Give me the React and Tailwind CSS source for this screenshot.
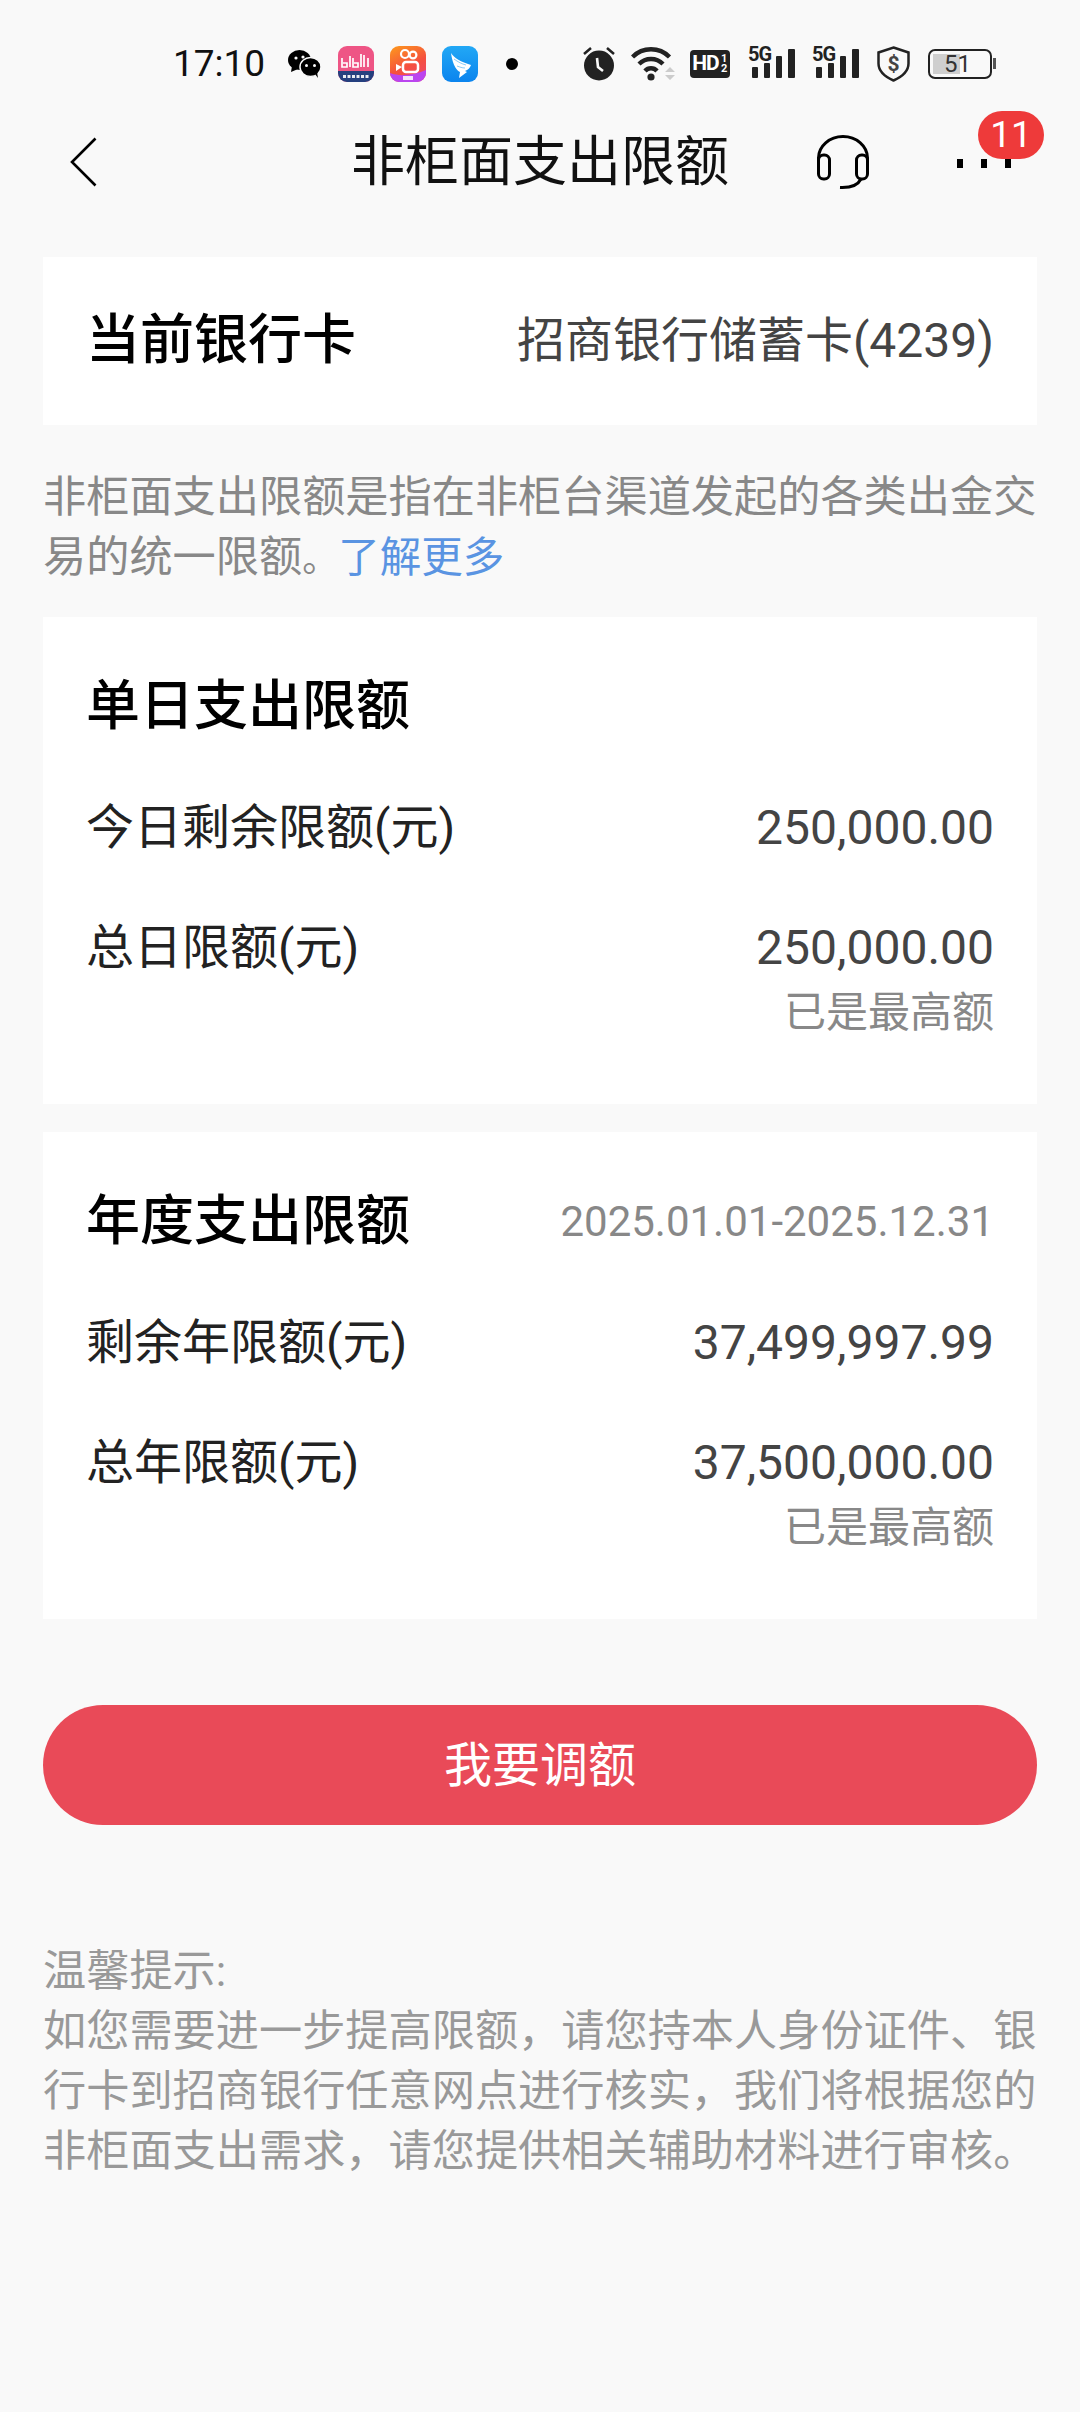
const cjk = "font-['Roboto','Noto_Sans_CJK_SC',sans-serif]";

const tip =
  "如您需要进一步提高限额\uFF0C请您持本人身份证件、银行卡到招商银行任意网点进行核实\uFF0C我们将根据您的非柜面支出需求\uFF0C请您提供相关辅助材料进行审核。";

const Bars = () => (
  <div className="relative w-[47px] h-[32px] mb-[3px]">
    <svg className="block" width="47" height="32" viewBox="0 0 47 32">
      <rect x="4" y="21" width="6" height="11" rx="1" fill="#222" />
      <rect x="16" y="17" width="6" height="15" rx="1" fill="#222" />
      <rect x="28" y="10" width="6" height="22" rx="1" fill="#222" />
      <rect x="40" y="3" width="7" height="29" rx="1" fill="#222" />
    </svg>
    <span className="absolute left-0 top-0 text-[20px] leading-[16px] font-bold text-[#222] tracking-[-1px]">5G</span>
  </div>
);

const StatusBar = () => (
  <div className="h-[127px] pl-[173px] flex items-center">
    <span className="text-[37px] leading-none text-[#111] w-[108px]">17:10</span>
    {/* wechat */}
    <svg className="ml-[7px]" width="33" height="28" viewBox="0 0 33 28">
      <ellipse cx="11.500" cy="10" rx="11.500" ry="10" fill="#000" />
      <path d="M4 16l-1 6 7-3z" fill="#000" />
      <ellipse cx="22.500" cy="17" rx="10.500" ry="9.500" fill="#000" stroke="#f9f9f9" strokeWidth="1.500" />
      <path d="M27 24l3 4-1-6z" fill="#000" />
      <circle cx="8" cy="8" r="1.600" fill="#f9f9f9" />
      <circle cx="15" cy="7" r="1.600" fill="#f9f9f9" />
      <circle cx="18.500" cy="15.500" r="1.500" fill="#f9f9f9" />
      <circle cx="26.500" cy="15.500" r="1.500" fill="#f9f9f9" />
    </svg>
    {/* app icons */}
    <svg className="ml-[17px]" width="36" height="36" viewBox="0 0 36 36">
      <rect width="36" height="36" rx="9" fill="#ee5585" />
      <path d="M0 25h36v2a9 9 0 0 1-9 9H9a9 9 0 0 1-9-9z" fill="#25407f" />
      <path d="M4 12v9h5v-4H5M12 10v11M15 12v9h5v-4h-4M23 8v13M26 9v12M30 12v9" stroke="#fff" strokeWidth="1.700" fill="none" />
      <path d="M5 30.500h26" stroke="#fff" strokeWidth="3" strokeDasharray="3 1.500" opacity="0.9" />
    </svg>
    <svg className="ml-[16px]" width="36" height="36" viewBox="0 0 36 36">
      <defs>
        <linearGradient id="ks" x1="0" y1="0" x2="0.5" y2="1">
          <stop offset="0" stopColor="#fd9a1c" />
          <stop offset="0.65" stopColor="#f5503f" />
          <stop offset="1" stopColor="#f04a60" />
        </linearGradient>
      </defs>
      <rect width="36" height="36" rx="9" fill="url(#ks)" />
      <path d="M0 27c10 4 24 2 36-3v3a9 9 0 0 1-9 9H9a9 9 0 0 1-9-9z" fill="#bb45ef" />
      <circle cx="15" cy="8" r="4" fill="none" stroke="#fff" strokeWidth="2.200" />
      <circle cx="23" cy="9" r="3.400" fill="none" stroke="#fff" strokeWidth="2.200" />
      <rect x="13" y="16" width="15" height="10" rx="3" fill="none" stroke="#fff" strokeWidth="2.500" />
      <path d="M12 21l-6-3v7z" fill="#fff" />
      <rect x="13" y="30" width="10" height="4" fill="#fff" opacity="0.85" />
    </svg>
    <svg className="ml-[16px]" width="36" height="36" viewBox="0 0 36 36">
      <defs>
        <linearGradient id="ding" x1="0" y1="0" x2="0" y2="1">
          <stop offset="0" stopColor="#22a8f5" />
          <stop offset="1" stopColor="#0b84ee" />
        </linearGradient>
      </defs>
      <rect width="36" height="36" rx="9" fill="url(#ding)" />
      <path d="M9 7c3 5 10 9 20 12-1 3-3 5-6 6l2 1-8 6 1-6C13 24 10 15 9 7z" fill="#fff" />
      <path d="M12 13c4 3 8 5 12 6M15 20c3 1 5 2 8 2" stroke="#8ccdf8" strokeWidth="1" fill="none" />
    </svg>
    <div className="ml-[28px] w-[12px] h-[12px] rounded-full bg-black" />
    <div className="ml-[65px] flex items-center">
      {/* alarm */}
      <svg width="32" height="34" viewBox="0 0 32 34">
        <circle cx="16" cy="18.500" r="15" fill="#222" />
        <path d="M1 7l7-6M31 7l-7-6" stroke="#222" strokeWidth="2.500" />
        <path d="M14 11l1 9 5 4" stroke="#f9f9f9" strokeWidth="2.600" fill="none" />
      </svg>
      {/* wifi */}
      <svg className="ml-[16px]" width="44" height="36" viewBox="0 0 44 36">
        <path d="M1.500 11a26 26 0 0 1 37 0M8 18a17 17 0 0 1 24 0M14 25a8 8 0 0 1 12 0" stroke="#222" strokeWidth="4.400" fill="none" />
        <circle cx="20" cy="31" r="3.600" fill="#222" />
        <path d="M34 26l5-5 5 5zM34 29l5 5 5-5z" fill="#ccc" />
      </svg>
      <div className="ml-[15px] w-[40px] h-[28px] rounded-[4px] bg-[#222] flex items-center justify-center text-white text-[21px] font-bold leading-none tracking-[-1px]">
        HD<span className="text-[11px] leading-[10px] w-[8px] text-center ml-[1px]">1<br />2</span>
      </div>
      <div className="ml-[18px] flex"><Bars /></div>
      <div className="ml-[17px] flex"><Bars /></div>
      <svg className="ml-[18px]" width="33" height="36" viewBox="0 0 33 36">
        <path d="M16.500 1.500l15 5v11c0 8-6 13-15 17C7.500 30.500 1.500 25.500 1.500 17.500v-11z" fill="none" stroke="#222" strokeWidth="2.500" />
        <text x="16.500" y="25" textAnchor="middle" fontSize="21" fontWeight="700" fontFamily="Roboto" fill="#444">$</text>
      </svg>
      <div className="ml-[18px] relative w-[64px] h-[30px] rounded-[7px] border-[2px] border-[#222] overflow-hidden flex items-center justify-center">
        <div className="absolute left-[3px] top-[3px] bottom-[3px] w-[27px] bg-[#cfcfcf]" />
        <span className="relative text-[24px] leading-none text-[#333] pr-[5px]">51</span>
      </div>
      <div className="ml-[1px] w-[3px] h-[11px] bg-[#555]" />
    </div>
  </div>
);

const NavBar = () => (
  <div className="relative h-[68px] flex items-center justify-center">
    <svg className="absolute left-[70px] top-[10px]" width="27" height="50" viewBox="0 0 27 50">
      <path d="M25.500 1.500L2 25l23.500 23.500" fill="none" stroke="#000" strokeWidth="2.600" />
    </svg>
    <span className="text-[54px] leading-none text-[#111] translate-y-[2px]">非柜面支出限额</span>
    <svg className="absolute left-[816px] top-[8px]" width="54" height="56" viewBox="0 0 54 56">
      <path d="M2.500 26v-3a24.500 21.500 0 0 1 49 0v3" fill="none" stroke="#000" strokeWidth="3" />
      <rect x="2.500" y="20" width="11" height="24" rx="5" fill="none" stroke="#000" strokeWidth="3" />
      <rect x="40.500" y="20" width="11" height="24" rx="5" fill="none" stroke="#000" strokeWidth="3" />
      <path d="M45 44c-3 6-10 9-21 8.500" fill="none" stroke="#000" strokeWidth="3" />
    </svg>
    <div className="absolute left-[957px] top-[32px] flex gap-[18px]">
      <div className="w-[6px] h-[9px] bg-black" />
      <div className="w-[6px] h-[9px] bg-black" />
      <div className="w-[6px] h-[9px] bg-black" />
    </div>
    <div className="absolute left-[978px] top-[-16px] w-[66px] h-[48px] rounded-full bg-[#ee3a3a] text-white text-[37px] leading-[48px] text-center">
      11
    </div>
  </div>
);

const Row = ({ label, value, note }) => (
  <div>
    <div className="flex justify-between items-center h-[56px]">
      <span className="text-[48px] text-[#222] leading-none">{label}</span>
      <span className="text-[48px] text-[#444] leading-none">{value}</span>
    </div>
    {note && (
      <div className="text-right text-[42px] text-[#888] leading-none mt-[16px]">{note}</div>
    )}
  </div>
);

const LimitCard = ({ title, period, rows }) => (
  <div className="bg-white h-[487px] pl-[43px] pr-[43px] pt-[58px]">
    <div className="flex justify-between items-center h-[64px]">
      <span className="text-[54px] font-medium text-black leading-none">{title}</span>
      {period && <span className="text-[42px] text-[#888] leading-none">{period}</span>}
    </div>
    <div className="mt-[61px] flex flex-col gap-[64px]">
      {rows.map((r) => (
        <Row key={r.label} {...r} />
      ))}
    </div>
  </div>
);

export default function App() {
  return (
    <div className={`w-[1080px] h-[2412px] bg-[#f9f9f9] ${cjk}`}>
      <StatusBar />
      <NavBar />

      <div className="mx-[43px] mt-[62px] bg-white h-[168px] pl-[43px] pr-[43px] flex items-center justify-between">
        <span className="text-[54px] font-medium text-black leading-none">当前银行卡</span>
        <span className="text-[48px] text-[#444] leading-none">招商银行储蓄卡(4239)</span>
      </div>

      <div className="mx-[43px] mt-[43px] text-[43.2px] leading-[60px] text-[#888]">
        <p>非柜面支出限额是指在非柜台渠道发起的各类出金交</p>
        <p className="flex items-baseline h-[60px]">
          <span>易的统一限额</span>
          <span className="text-[36px]">。</span>
          <span className="text-[41.5px] text-[#5a94e2]">了解更多</span>
        </p>
      </div>

      <div className="mx-[43px] mt-[29px] flex flex-col gap-[28px]">
        <LimitCard
          title="单日支出限额"
          rows={[
            { label: "今日剩余限额(元)", value: "250,000.00" },
            { label: "总日限额(元)", value: "250,000.00", note: "已是最高额" },
          ]}
        />
        <LimitCard
          title="年度支出限额"
          period="2025.01.01-2025.12.31"
          rows={[
            { label: "剩余年限额(元)", value: "37,499,997.99" },
            { label: "总年限额(元)", value: "37,500,000.00", note: "已是最高额" },
          ]}
        />
      </div>

      <button className="block mx-[43px] mt-[86px] w-[994px] h-[120px] pt-[2px] rounded-full bg-[#e94a58] text-white text-[48px] leading-none">
        我要调额
      </button>

      <p className="mx-[43px] mt-[117px] text-[43.2px] leading-[60px] text-[#999]">
        温馨提示:
        <br />
        {tip}
      </p>
    </div>
  );
}
